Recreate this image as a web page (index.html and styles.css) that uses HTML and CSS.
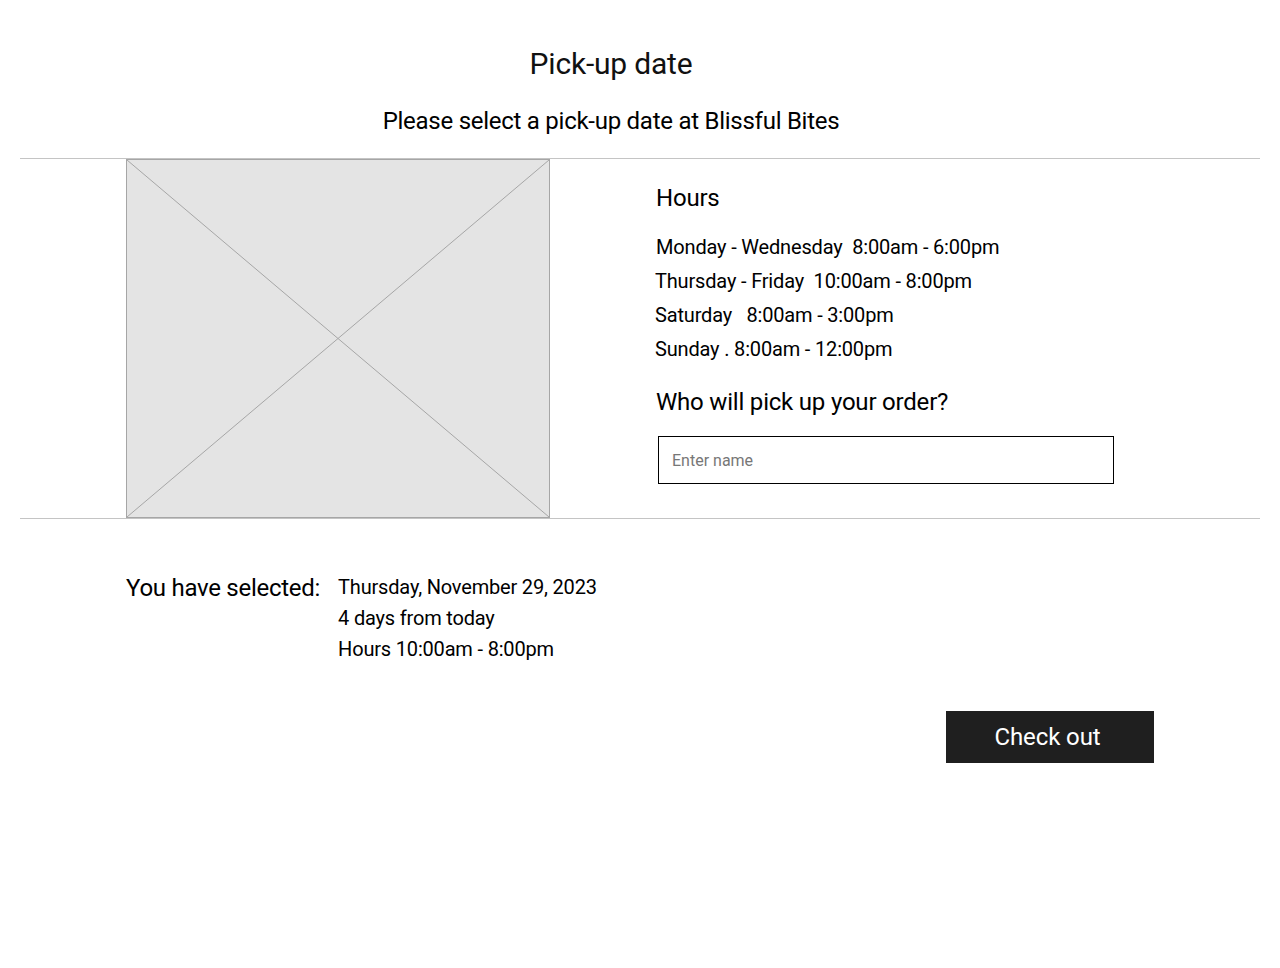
FILE: index.html
```html
<!DOCTYPE html>
<html lang="en">
<head>
<meta charset="utf-8">
<title>Pick-up date</title>
<link rel="stylesheet" href="styles.css">
</head>
<body>
<div class="page">
  <header class="header">
    <h1 class="title">Pick-up date</h1>
    <p class="subtitle">Please select a pick-up date at Blissful Bites</p>
  </header>
  <section class="band">
    <div class="placeholder">
      <svg class="ph-svg" viewBox="0 0 422 358" preserveAspectRatio="none">
        <line x1="0" y1="0" x2="422" y2="358" stroke="#a6a6a6" stroke-width="1"/>
        <line x1="422" y1="0" x2="0" y2="358" stroke="#a6a6a6" stroke-width="1"/>
      </svg>
    </div>
    <div class="info">
      <h2 class="heading">Hours</h2>
      <ul class="hours">
        <li class="hours-row first">Monday - Wednesday&nbsp; 8:00am - 6:00pm</li>
        <li class="hours-row">Thursday - Friday&nbsp; 10:00am - 8:00pm</li>
        <li class="hours-row">Saturday &nbsp; 8:00am - 3:00pm</li>
        <li class="hours-row">Sunday . 8:00am - 12:00pm</li>
      </ul>
      <h2 class="heading who">Who will pick up your order?</h2>
      <input class="name-input" type="text" placeholder="Enter name">
    </div>
  </section>
  <section class="summary">
    <div class="selected">
      <div class="selected-label">You have selected:</div>
      <div class="selected-details">
        <div class="detail">Thursday, November 29, 2023</div>
        <div class="detail">4 days from today</div>
        <div class="detail">Hours 10:00am - 8:00pm</div>
      </div>
    </div>
    <div class="actions">
      <button class="checkout" type="button">Check out</button>
    </div>
  </section>
</div>
</body>
</html>
```

FILE: styles.css
```css
* { box-sizing: border-box; }
html, body { margin: 0; padding: 0; background: #fff; }
body {
  font-family: Roboto, "Liberation Sans", Arial, sans-serif;
  color: #111;
  width: 1280px;
  height: 968px;
}
.page { padding: 0 20px; }
.header {
  width: 1182px;
  text-align: center;
  padding-top: 46px;
}
.title {
  margin: 0;
  font-size: 30px;
  font-weight: 400;
  line-height: 36px;
  letter-spacing: -0.2px;
  color: #111;
}
.subtitle {
  margin: 25px 0 0;
  font-size: 24px;
  line-height: 28px;
  font-weight: 400;
  letter-spacing: -0.26px;
  color: #000;
}
.band {
  margin-top: 23px;
  border-top: 1px solid #c4c4c4;
  border-bottom: 1px solid #c4c4c4;
  display: flex;
  padding: 0 106px;
  gap: 106px;
}
.placeholder {
  width: 424px;
  height: 359px;
  background: #e4e4e4;
  border: 1px solid #a6a6a6;
  flex: none;
}
.ph-svg { display: block; width: 100%; height: 100%; }
.info { padding-top: 25px; flex: 1; }
.heading {
  margin: 0;
  font-size: 24px;
  font-weight: 400;
  line-height: 28px;
  letter-spacing: -0.2px;
  color: #000;
}
.hours { list-style: none; margin: 18px 0 0; padding: 0; }
.hours-row {
  font-size: 20px;
  line-height: 34px;
  margin-left: -1px;
  letter-spacing: -0.17px;
  color: #000;
}
.hours-row.first { margin-left: 0; }
.who { margin-top: 22px; }
.name-input {
  display: block;
  margin: 20px 0 0 2px;
  width: 456px;
  height: 48px;
  border: 1px solid #000;
  border-radius: 0;
  padding: 0 13px;
  font-family: Roboto, "Liberation Sans", Arial, sans-serif;
  font-size: 16px;
  color: #000;
  outline: none;
}
.name-input::placeholder { color: #777; }
.summary { padding: 52px 106px 0; }
.selected { display: flex; gap: 18px; }
.selected-label {
  font-size: 24px;
  line-height: 31px;
  padding-top: 2px;
  letter-spacing: -0.27px;
  color: #000;
}
.selected-details { padding-top: 1px; }
.detail {
  font-size: 20px;
  line-height: 31px;
  letter-spacing: -0.18px;
  color: #000;
}
.actions { display: flex; justify-content: flex-end; margin-top: 46px; }
.checkout {
  width: 208px;
  height: 52px;
  background: #1f1f1f;
  color: #fff;
  border: none;
  border-radius: 0;
  font-family: Roboto, "Liberation Sans", Arial, sans-serif;
  font-size: 24px;
  letter-spacing: -0.1px;
  padding: 0 5px 0 0;
}
```
